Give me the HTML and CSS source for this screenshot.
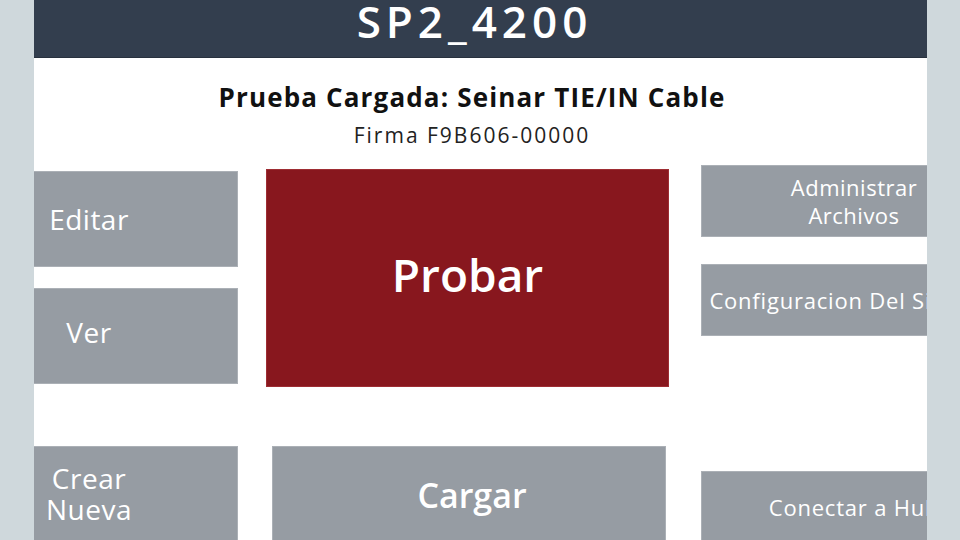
FILE: index.html
```html
<!DOCTYPE html>
<html lang="es">
<head>
<meta charset="utf-8">
<title>SP2_4200</title>
<link rel="stylesheet" href="styles.css">
</head>
<body>
<div class="screen">
  <main class="panel">
    <header class="topbar"><h1 class="device">SP2_4200</h1></header>
    <section class="info">
      <h2 class="loaded">Prueba Cargada: Seinar TIE/IN Cable</h2>
      <p class="firm">Firma F9B606-00000</p>
    </section>
    <section class="grid">
      <div class="col col-left">
        <button class="btn btn-left btn-edit">Editar</button>
        <button class="btn btn-left btn-view">Ver</button>
        <button class="btn btn-left btn-new">Crear Nueva</button>
      </div>
      <div class="col col-mid">
        <button class="btn btn-test">Probar</button>
        <button class="btn btn-load">Cargar</button>
      </div>
      <div class="col col-right">
        <button class="btn btn-right btn-files">Administrar Archivos</button>
        <button class="btn btn-right btn-config">Configuracion Del Sistema</button>
        <button class="btn btn-right btn-hub">Conectar a Hub</button>
      </div>
    </section>
  </main>
</div>
</body>
</html>
```
FILE: styles.css
```css
* { box-sizing: border-box; }
html, body { margin: 0; padding: 0; }
body {
  width: 960px;
  height: 540px;
  overflow: hidden;
  background: #cfd8dc;
  font-family: "Open Sans", "Noto Sans", sans-serif;
}
.screen {
  display: flex;
  padding-left: 34px;
  height: 540px;
}
.panel {
  width: 893px;
  height: 540px;
  background: #ffffff;
  overflow: hidden;
  display: flex;
  flex-direction: column;
}
.topbar {
  height: 58px;
  background: #333e4e;
  border-bottom: 1px solid #28313e;
  padding-right: 17px;
  flex: none;
}
.device {
  margin: 0;
  text-align: center;
  color: #ffffff;
  font-size: 44px;
  font-weight: 600;
  line-height: 42px;
  letter-spacing: 5px;
  text-indent: 5px;
}
.info {
  height: 107px;
  text-align: center;
  padding-top: 22px;
  padding-right: 17px;
  flex: none;
}
.loaded {
  margin: 0;
  font-size: 26px;
  font-weight: 700;
  line-height: 34px;
  letter-spacing: 1.15px;
  color: #111111;
}
.firm {
  margin: 8px 0 0;
  font-size: 21px;
  line-height: 26px;
  letter-spacing: 2px;
  color: #222222;
}
.grid {
  display: flex;
  align-items: flex-start;
}
.col { display: flex; flex-direction: column; flex: none; }
.btn {
  border: 1px solid #abb0b6;
  background: #969ca3;
  color: #ffffff;
  font-family: inherit;
  padding: 0;
  margin: 0;
  display: flex;
  align-items: center;
  justify-content: center;
  text-align: center;
}
.col-left { width: 232px; padding-top: 6px; }
.btn-left {
  width: 298px;
  height: 96px;
  margin-left: -94px;
  padding: 0 94px;
  font-size: 28px;
  line-height: 31px;
  letter-spacing: 0.5px;
}
.btn-view { margin-top: 21px; padding-bottom: 8px; }
.btn-new { margin-top: 62px; }

.col-mid { width: 435px; padding-top: 4px; }
.btn-test {
  width: 403px;
  height: 218px;
  background: #88171e;
  border-color: #9e2d33;
  font-size: 46px;
  font-weight: 600;
  line-height: 46px;
  align-items: flex-start;
  padding-top: 81px;
}
.btn-load {
  width: 394px;
  height: 102px;
  margin-top: 59px;
  margin-left: 6px;
  font-size: 34px;
  font-weight: 600;
  line-height: 34px;
  align-items: flex-start;
  padding-top: 31px;
  padding-left: 6px;
}
.col-right { width: 306px; }
.btn-right {
  width: 306px;
  height: 72px;
  font-size: 22px;
  line-height: 28px;
  letter-spacing: 0.5px;
}
.btn-files { padding: 0 56px; }
.btn-config { margin-top: 27px; white-space: nowrap; letter-spacing: 0.8px; }
.btn-hub { margin-top: 135px; white-space: nowrap; letter-spacing: 0.8px; }
```
